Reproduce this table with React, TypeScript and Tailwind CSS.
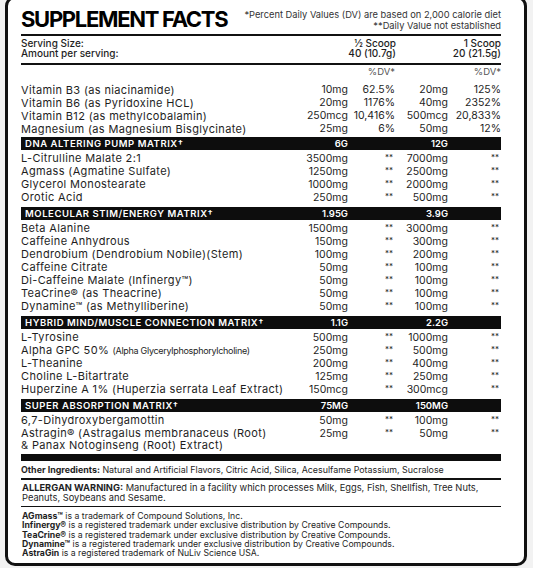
import React from "react";

type Row = { name: React.ReactNode; a1: string; a2: string };
type Section = { title: string; a1: string; a2: string; rows: Row[] };

const vitamins = [
  ["Vitamin B3 (as niacinamide)", "10mg", "62.5%", "20mg", "125%"],
  ["Vitamin B6 (as Pyridoxine HCL)", "20mg", "1176%", "40mg", "2352%"],
  ["Vitamin B12 (as methylcobalamin)", "250mcg", "10,416%", "500mcg", "20,833%"],
  ["Magnesium (as Magnesium Bisglycinate)", "25mg", "6%", "50mg", "12%"],
];

const sections: Section[] = [
  {
    title: "DNA Altering Pump Matrix†",
    a1: "6G",
    a2: "12G",
    rows: [
      { name: "L-Citrulline Malate 2:1", a1: "3500mg", a2: "7000mg" },
      { name: "Agmass (Agmatine Sulfate)", a1: "1250mg", a2: "2500mg" },
      { name: "Glycerol Monostearate", a1: "1000mg", a2: "2000mg" },
      { name: "Orotic Acid", a1: "250mg", a2: "500mg" },
    ],
  },
  {
    title: "Molecular Stim/Energy Matrix†",
    a1: "1.95G",
    a2: "3.9G",
    rows: [
      { name: "Beta Alanine", a1: "1500mg", a2: "3000mg" },
      { name: "Caffeine Anhydrous", a1: "150mg", a2: "300mg" },
      { name: "Dendrobium (Dendrobium Nobile)(Stem)", a1: "100mg", a2: "200mg" },
      { name: "Caffeine Citrate", a1: "50mg", a2: "100mg" },
      { name: "Di-Caffeine Malate (Infinergy™)", a1: "50mg", a2: "100mg" },
      { name: "TeaCrine® (as Theacrine)", a1: "50mg", a2: "100mg" },
      { name: "Dynamine™ (as Methylliberine)", a1: "50mg", a2: "100mg" },
    ],
  },
  {
    title: "Hybrid Mind/Muscle Connection Matrix†",
    a1: "1.1G",
    a2: "2.2G",
    rows: [
      { name: "L-Tyrosine", a1: "500mg", a2: "1000mg" },
      {
        name: (
          <>
            Alpha GPC 50%{" "}
            <span className="text-[9px] tracking-[-0.3px]">(Alpha Glycerylphosphorylcholine)</span>
          </>
        ),
        a1: "250mg",
        a2: "500mg",
      },
      { name: "L-Theanine", a1: "200mg", a2: "400mg" },
      { name: "Choline L-Bitartrate", a1: "125mg", a2: "250mg" },
      { name: "Huperzine A 1% (Huperzia serrata Leaf Extract)", a1: "150mcg", a2: "300mcg" },
    ],
  },
  {
    title: "Super Absorption Matrix†",
    a1: "75MG",
    a2: "150MG",
    rows: [
      { name: "6,7-Dihydroxybergamottin", a1: "50mg", a2: "100mg" },
      {
        name: (
          <div className="leading-[12px]">
            <div>Astragin® (Astragalus membranaceus (Root)</div>
            <div>& Panax Notoginseng (Root) Extract)</div>
          </div>
        ),
        a1: "25mg",
        a2: "50mg",
      },
    ],
  },
];

const cols = "grid grid-cols-[267px_60px_47px_53px_53px]";

function Stars() {
  return <span className="self-start pt-[1px] text-right text-[8px] leading-[8px] pr-[2px]">**</span>;
}

export default function App() {
  return (
    <div
      className="w-[533px] h-[568px] bg-[#f2f2f2] overflow-hidden text-[#1e1e1e]"
      style={{ fontFamily: "Inter, 'Liberation Sans', sans-serif" }}
    >
      <div className="ml-[5px] -mt-[4px] w-[522px] h-[570px] border-[3px] border-[#111] rounded-[10px] bg-white pl-[13px] pr-[23px]">
        {/* header */}
        <div className="flex justify-between items-start h-[35px] pt-[8px]">
          <h1 className="text-[22px] leading-[24px] font-bold tracking-[-1.3px] text-black">SUPPLEMENT FACTS</h1>
          <div className="text-right text-[9.3px] leading-[10.5px] pt-[3px] text-[#333]">
            <div>*Percent Daily Values (DV) are based on 2,000 calorie diet</div>
            <div>**Daily Value not established</div>
          </div>
        </div>
        <div className="h-[1.5px] bg-[#111]" />

        {/* serving */}
        <div className="grid grid-cols-[1fr_90px_105px] text-[10px] leading-[10.5px] font-medium pt-[2px] h-[27px]">
          <div>
            <div>Serving Size:</div>
            <div>Amount per serving:</div>
          </div>
          <div className="text-right">
            <div>½ Scoop</div>
            <div>40 (10.7g)</div>
          </div>
          <div className="text-right">
            <div>1 Scoop</div>
            <div>20 (21.5g)</div>
          </div>
        </div>
        <div className="h-[2.5px] bg-[#111]" />

        {/* %DV */}
        <div className={`${cols} h-[15px] items-center text-[9.5px] text-[#555]`}>
          <div />
          <div />
          <div className="text-right">%DV*</div>
          <div />
          <div className="text-right">%DV*</div>
        </div>

        {/* vitamins */}
        <div className="pt-[2px] pb-[3px]">
          {vitamins.map((v) => (
            <div key={v[0]} className={`${cols} h-[13px] items-center text-[10.5px]`}>
              <div className="whitespace-nowrap text-[11px] tracking-[0.35px]">{v[0]}</div>
              <div className="text-right">{v[1]}</div>
              <div className="text-right">{v[2]}</div>
              <div className="text-right">{v[3]}</div>
              <div className="text-right">{v[4]}</div>
            </div>
          ))}
        </div>

        {sections.map((s) => (
          <div key={s.title}>
            <div
              className={`${cols} h-[13px] items-center bg-[#0d0d0d] text-white text-[9.5px] font-semibold uppercase tracking-[0.55px]`}
            >
              <div className="pl-[4px] whitespace-nowrap">{s.title}</div>
              <div className="text-right tracking-normal">{s.a1}</div>
              <div />
              <div className="text-right tracking-normal">{s.a2}</div>
              <div />
            </div>
            <div className="pt-[2px] pb-[3px]">
              {s.rows.map((r, i) => (
                <div key={i} className={`${cols} min-h-[13px] items-start text-[10.5px] leading-[13px]`}>
                  <div className="whitespace-nowrap text-[11px] tracking-[0.35px]">{r.name}</div>
                  <div className="text-right">{r.a1}</div>
                  <Stars />
                  <div className="text-right">{r.a2}</div>
                  <Stars />
                </div>
              ))}
            </div>
          </div>
        ))}

        <div className="h-[7px] bg-[#0d0d0d]" />

        {/* other ingredients */}
        <div className="text-[8.9px] leading-[12px] pt-[3px] pb-[2px] whitespace-nowrap">
          <span className="font-bold">Other Ingredients:</span> Natural and Artificial Flavors, Citric Acid, Silica,
          Acesulfame Potassium, Sucralose
        </div>
        <div className="h-[1.5px] bg-[#111]" />
        <div className="text-[9.3px] leading-[10.5px] pt-[3px] pb-[2px] pl-[1px]">
          <div className="whitespace-nowrap">
            <span className="font-bold">ALLERGAN WARNING:</span> Manufactured in a facility which processes Milk,
            Eggs, Fish, Shellfish, Tree Nuts,
          </div>
          <div>Peanuts, Soybeans and Sesame.</div>
        </div>
        <div className="h-[1.5px] bg-[#111]" />

        {/* trademarks */}
        <div className="text-[8.7px] leading-[9.3px] pt-[5px] pl-[1px] whitespace-nowrap">
          <div>
            <span className="font-bold">AGmass™</span> is a trademark of Compound Solutions, Inc.
          </div>
          <div>
            <span className="font-bold">Infinergy®</span> is a registered trademark under exclusive distribution by
            Creative Compounds.
          </div>
          <div>
            <span className="font-bold">TeaCrine®</span> is a registered trademark under exclusive distribution by
            Creative Compounds.
          </div>
          <div>
            <span className="font-bold">Dynamine™</span> is a registered trademark under exclusive distribution by
            Creative Compounds.
          </div>
          <div>
            <span className="font-bold">AstraGin</span> is a registered trademark of NuLiv Science USA.
          </div>
        </div>
      </div>
    </div>
  );
}
